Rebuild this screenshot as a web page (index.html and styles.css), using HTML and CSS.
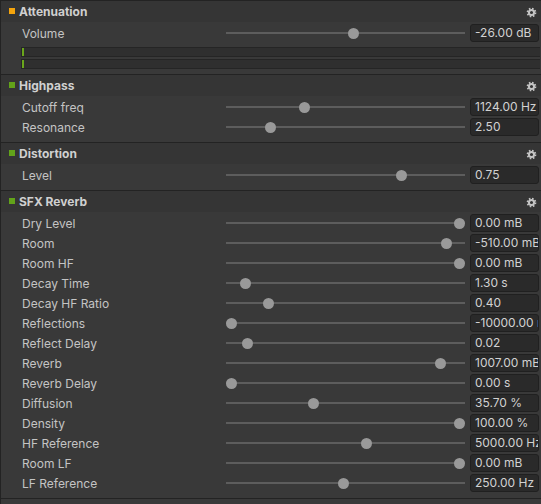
FILE: index.html
```html
<!DOCTYPE html>
<html>
<head>
<meta charset="utf-8">
<link rel="stylesheet" href="styles.css">
</head>
<body>
<div class="panel">
  <section class="fx">
    <div class="fx-head"><span class="sq orange"></span><span class="title">Attenuation</span><svg class="gear" viewBox="0 0 12 12"><circle cx="6" cy="6" r="4.3" fill="none" stroke="#c4c4c4" stroke-width="2" stroke-dasharray="1.7 1.68"/><circle cx="6" cy="6" r="2.8" fill="none" stroke="#c4c4c4" stroke-width="2.2"/></svg></div>
    <div class="fx-body">
      <div class="row"><span class="lbl">Volume</span><div class="slider"><i class="thumb" style="--v:0.537"></i></div><span class="val">-26.00 dB</span></div>
      <div class="meters">
        <div class="meter"><i class="mark"></i></div>
        <div class="meter"><i class="mark"></i></div>
      </div>
    </div>
  </section>
  <section class="fx">
    <div class="fx-head"><span class="sq green"></span><span class="title">Highpass</span><svg class="gear" viewBox="0 0 12 12"><circle cx="6" cy="6" r="4.3" fill="none" stroke="#c4c4c4" stroke-width="2" stroke-dasharray="1.7 1.68"/><circle cx="6" cy="6" r="2.8" fill="none" stroke="#c4c4c4" stroke-width="2.2"/></svg></div>
    <div class="fx-body">
      <div class="row"><span class="lbl">Cutoff freq</span><div class="slider"><i class="thumb" style="--v:0.319"></i></div><span class="val">1124.00 Hz</span></div>
      <div class="row"><span class="lbl">Resonance</span><div class="slider"><i class="thumb" style="--v:0.170"></i></div><span class="val">2.50</span></div>
    </div>
  </section>
  <section class="fx">
    <div class="fx-head"><span class="sq green"></span><span class="title">Distortion</span><svg class="gear" viewBox="0 0 12 12"><circle cx="6" cy="6" r="4.3" fill="none" stroke="#c4c4c4" stroke-width="2" stroke-dasharray="1.7 1.68"/><circle cx="6" cy="6" r="2.8" fill="none" stroke="#c4c4c4" stroke-width="2.2"/></svg></div>
    <div class="fx-body">
      <div class="row"><span class="lbl">Level</span><div class="slider"><i class="thumb" style="--v:0.747"></i></div><span class="val">0.75</span></div>
    </div>
  </section>
  <section class="fx">
    <div class="fx-head"><span class="sq green"></span><span class="title">SFX Reverb</span><svg class="gear" viewBox="0 0 12 12"><circle cx="6" cy="6" r="4.3" fill="none" stroke="#c4c4c4" stroke-width="2" stroke-dasharray="1.7 1.68"/><circle cx="6" cy="6" r="2.8" fill="none" stroke="#c4c4c4" stroke-width="2.2"/></svg></div>
    <div class="fx-body">
      <div class="row"><span class="lbl">Dry Level</span><div class="slider"><i class="thumb" style="--v:1"></i></div><span class="val">0.00 mB</span></div>
      <div class="row"><span class="lbl">Room</span><div class="slider"><i class="thumb" style="--v:0.943"></i></div><span class="val">-510.00 mB</span></div>
      <div class="row"><span class="lbl">Room HF</span><div class="slider"><i class="thumb" style="--v:1"></i></div><span class="val">0.00 mB</span></div>
      <div class="row"><span class="lbl">Decay Time</span><div class="slider"><i class="thumb" style="--v:0.061"></i></div><span class="val">1.30 s</span></div>
      <div class="row"><span class="lbl">Decay HF Ratio</span><div class="slider"><i class="thumb" style="--v:0.162"></i></div><span class="val">0.40</span></div>
      <div class="row"><span class="lbl">Reflections</span><div class="slider"><i class="thumb" style="--v:0"></i></div><span class="val">-10000.00 mB</span></div>
      <div class="row"><span class="lbl">Reflect Delay</span><div class="slider"><i class="thumb" style="--v:0.07"></i></div><span class="val">0.02</span></div>
      <div class="row"><span class="lbl">Reverb</span><div class="slider"><i class="thumb" style="--v:0.917"></i></div><span class="val">1007.00 mB</span></div>
      <div class="row"><span class="lbl">Reverb Delay</span><div class="slider"><i class="thumb" style="--v:0"></i></div><span class="val">0.00 s</span></div>
      <div class="row"><span class="lbl">Diffusion</span><div class="slider"><i class="thumb" style="--v:0.358"></i></div><span class="val">35.70 %</span></div>
      <div class="row"><span class="lbl">Density</span><div class="slider"><i class="thumb" style="--v:1"></i></div><span class="val">100.00 %</span></div>
      <div class="row"><span class="lbl">HF Reference</span><div class="slider"><i class="thumb" style="--v:0.59"></i></div><span class="val">5000.00 Hz</span></div>
      <div class="row"><span class="lbl">Room LF</span><div class="slider"><i class="thumb" style="--v:1"></i></div><span class="val">0.00 mB</span></div>
      <div class="row"><span class="lbl">LF Reference</span><div class="slider"><i class="thumb" style="--v:0.493"></i></div><span class="val">250.00 Hz</span></div>
    </div>
  </section>
  <div class="end"></div>
</div>
</body>
</html>
```

FILE: styles.css
```css
* { box-sizing: border-box; }
html, body {
  margin: 0;
  padding: 0;
  background: #393939;
  font-family: Inter, "Noto Sans", sans-serif;
  font-size: 12px;
  color: #c4c4c4;
}
.panel {
  width: 541px;
  height: 504px;
  border-left: 1px solid #232323;
  overflow: hidden;
}
.fx {
  border-top: 1px solid #232323;
}
.fx-head {
  height: 21px;
  background: #353535;
  display: flex;
  align-items: center;
  padding-left: 8px;
  padding-right: 4px;
}
.sq {
  width: 6px;
  height: 6px;
  margin-right: 4px;
  margin-top: -1px;
}
.sq.orange { background: #f4a40d; }
.sq.green { background: #62a31a; }
.title {
  font-weight: 700;
  color: #d0d0d0;
  flex: 1;
  padding-bottom: 1px;
}
.gear {
  width: 11px;
  height: 11px;
  margin-top: 1px;
}
.fx-body {
  padding: 1px 0 5px 0;
}
.row {
  height: 20px;
  display: grid;
  grid-template-columns: 199px 239px 69px;
  column-gap: 5px;
  align-items: center;
  padding-left: 21px;
}
.lbl {
  white-space: nowrap;
  color: #c4c4c4;
}
.slider {
  position: relative;
  height: 11px;
}
.slider::before {
  content: "";
  position: absolute;
  left: 0;
  right: 0;
  top: 4.5px;
  height: 2px;
  background: #5d5d5d;
}
.thumb {
  position: absolute;
  top: 0;
  width: 11px;
  height: 11px;
  border-radius: 50%;
  background: #999999;
  left: calc(var(--v) * (100% - 11px));
}
.val {
  height: 18px;
  line-height: 16px;
  background: #2a2a2a;
  border: 1px solid #202020;
  border-radius: 3px;
  padding-left: 4px;
  white-space: nowrap;
  overflow: hidden;
  color: #d2d2d2;
}
.meters {
  padding: 4px 1px 0 20px;
  display: flex;
  flex-direction: column;
  gap: 2px;
}
.meter {
  height: 10px;
  background: #2f2f2f;
  border: 1px solid #252525;
  border-right: none;
  position: relative;
}
.mark {
  position: absolute;
  left: 0;
  top: 0;
  width: 2px;
  height: 8px;
  background: #6aa61c;
}
.end {
  border-top: 1px solid #232323;
  height: 10px;
}
```
